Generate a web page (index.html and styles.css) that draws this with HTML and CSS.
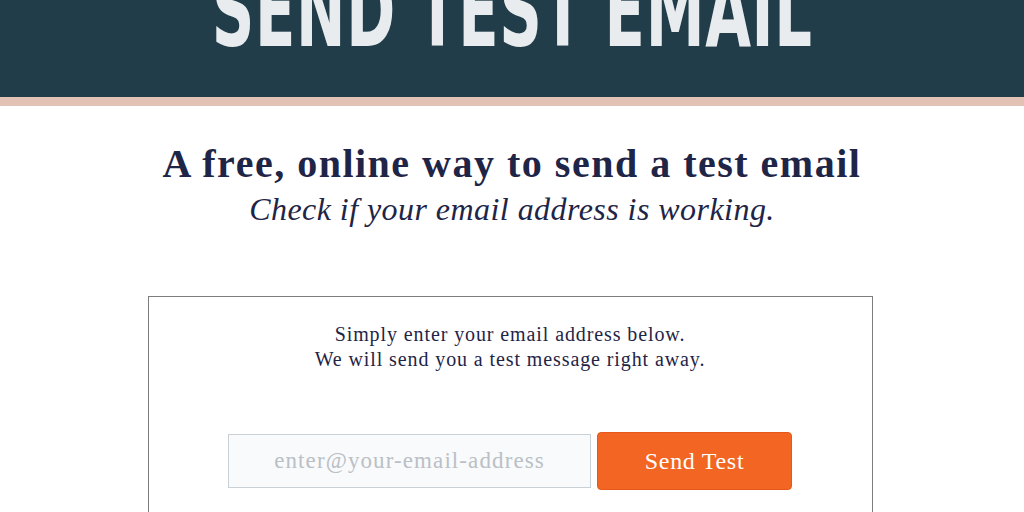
FILE: index.html
```html
<!DOCTYPE html>
<html lang="en">
<head>
<meta charset="utf-8">
<title>Send Test Email</title>
<link rel="stylesheet" href="styles.css">
</head>
<body>
<header class="site-header">
  <h1 class="site-title">SEND TEST EMAIL</h1>
</header>
<main class="content">
  <section class="intro">
    <h2 class="intro-title">A free, online way to send a test email</h2>
    <p class="intro-sub">Check if your email address is working.</p>
  </section>
  <section class="card">
    <p class="card-text">Simply enter your email address below.<br>We will send you a test message right away.</p>
    <form class="send-form">
      <input class="email-input" type="email" placeholder="enter@your-email-address">
      <button class="send-btn" type="button">Send Test</button>
    </form>
  </section>
</main>
</body>
</html>
```
FILE: styles.css
```css
html, body {
  margin: 0;
  padding: 0;
  background: #ffffff;
  font-family: "Liberation Serif", "DejaVu Serif", serif;
  color: #1c2340;
  overflow: hidden;
}
.site-header {
  height: 97px;
  background: #213d4a;
  border-bottom: 9px solid #e3c2b6;
  overflow: hidden;
  display: flex;
  justify-content: center;
  align-items: flex-end;
}
.site-title {
  margin: 0 0 49px 0;
  font-family: "DejaVu Sans Condensed", "DejaVu Sans", sans-serif;
  font-weight: 700;
  font-size: 100px;
  line-height: 0.73;
  color: #e8ecee;
  letter-spacing: 1px;
  transform: scaleX(0.657);
  white-space: nowrap;
}
.content {
  display: flex;
  flex-direction: column;
  align-items: center;
}
.intro {
  text-align: center;
  margin-top: 36px;
}
.intro-title {
  margin: 0;
  font-size: 40px;
  font-weight: 700;
  line-height: 44px;
  letter-spacing: 1.5px;
  color: #1f2547;
}
.intro-sub {
  margin: 4px 0 0;
  font-size: 32px;
  font-style: italic;
  line-height: 38px;
  letter-spacing: 0.45px;
  color: #1f2547;
}
.card {
  margin-top: 68px;
  margin-right: 4px;
  width: 725px;
  border: 1px solid #7d7d7d;
  border-bottom: none;
  height: 240px;
  box-sizing: border-box;
  text-align: center;
  padding-top: 25px;
}
.card-text {
  margin: 0;
  font-size: 20px;
  line-height: 25px;
  letter-spacing: 0.9px;
  color: #1f2547;
}
.send-form {
  margin-top: 60px;
  display: flex;
  justify-content: center;
  align-items: center;
  gap: 6px;
}
.email-input {
  width: 363px;
  height: 54px;
  box-sizing: border-box;
  border: 1px solid #c9d1d6;
  background: #f9fafb;
  font-family: "Liberation Serif", "DejaVu Serif", serif;
  font-size: 23px;
  letter-spacing: 1.1px;
  text-align: center;
  color: #333;
  padding: 0 6px;
  margin-left: 2px;
}
.email-input::placeholder {
  color: #b9c0c6;
}
.send-btn {
  width: 195px;
  height: 58px;
  box-sizing: border-box;
  border: 1px solid #e8581a;
  border-radius: 4px;
  background: #f26522;
  color: #ffffff;
  font-family: "Liberation Serif", "DejaVu Serif", serif;
  font-size: 24px;
  letter-spacing: 0.7px;
  cursor: pointer;
  margin-right: 2px;
}
```
